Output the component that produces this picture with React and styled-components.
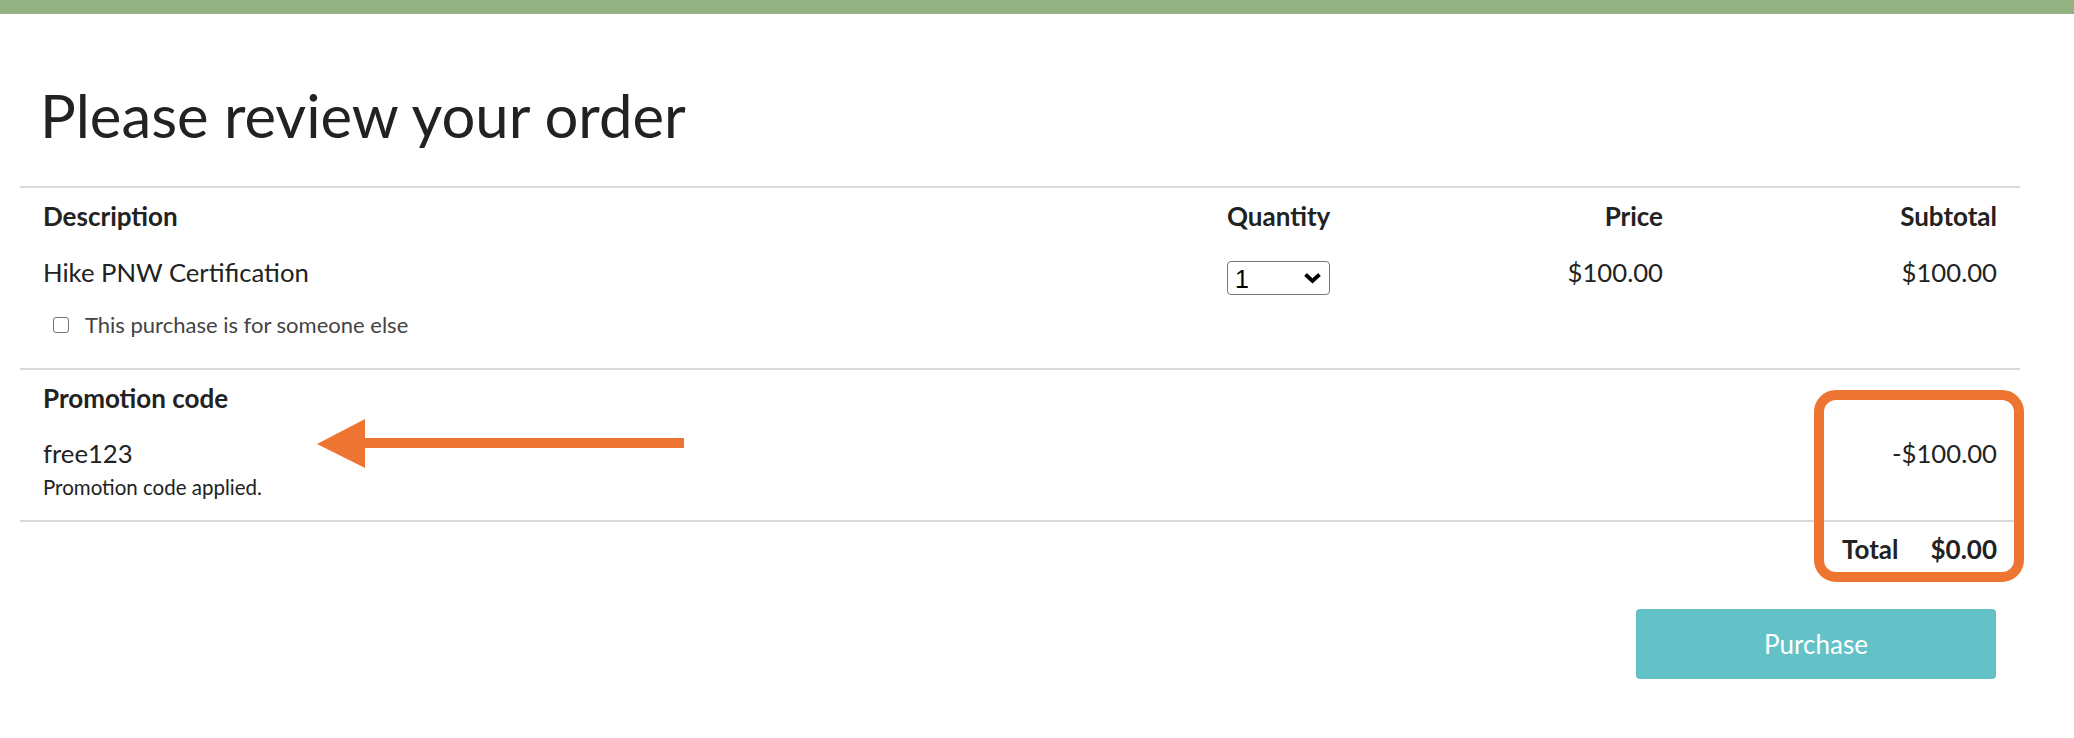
import React from 'react';
import styled, { createGlobalStyle } from 'styled-components';

const GlobalStyle = createGlobalStyle`
	body {
		margin: 0;
		background: #fff;
		font-family: Lato, "Noto Sans", sans-serif;
		color: #222;
	}
	* { box-sizing: border-box; }
`;

const Shell = styled.div`
	position: relative;
	min-height: 738px;
`;

const TopBar = styled.div`
	height: 14px;
	background-color: #94b183;
`;

const Page = styled.main`
	width: 2040px;
	padding: 0 20px;
`;

const Title = styled.h1`
	margin: 68px 0 37px 20px;
	font-size: 59.8px;
	font-weight: 400;
	line-height: 67px;
	color: #222;
`;

const Section = styled.section`
	border-top: 2px solid #d9d9d9;
	padding: ${(p) => p.$pt || 0}px 0 ${(p) => p.$pb || 0}px;
`;

const Row = styled.div`
	display: grid;
	grid-template-columns: 1184px 240px 242px 334px;
	margin-top: ${(p) => p.$mt || 0}px;
`;

const Cell = styled.div`
	padding: 0 23px;
	text-align: ${(p) => (p.$right ? 'right' : 'left')};
	font-size: ${(p) => (p.$head ? 26 : 25.7)}px;
	font-weight: ${(p) => (p.$head ? 700 : 400)};
	line-height: ${(p) => (p.$head ? 30 : 29)}px;
	color: #222;
`;

const SectionLabel = styled.div`
	padding: 0 23px;
	font-size: 26px;
	font-weight: 700;
	line-height: 30px;
`;

const CheckLine = styled.label`
	display: flex;
	align-items: center;
	gap: 16px;
	margin: 26px 0 0 10px;
	font-size: 22px;
	line-height: 24px;
	color: #444;
`;

const Check = styled.input`
	appearance: none;
	margin: 0;
	width: 16px;
	height: 16px;
	border: 1.5px solid #777;
	border-radius: 3px;
	background: #fff;
`;

const SelectWrap = styled.div`
	position: relative;
	width: 103px;
	height: 34px;
	margin-top: 3px;
`;

const Select = styled.select`
	appearance: none;
	width: 100%;
	height: 100%;
	padding: 2px 0 0 7px;
	border: 1.5px solid #777;
	border-radius: 4px;
	background: #fff;
	font-family: "Liberation Sans", Arial, sans-serif;
	font-size: 25px;
	color: #000;
`;

const Chevron = styled.svg`
	position: absolute;
	right: 8px;
	top: 11px;
	pointer-events: none;
`;

const Note = styled.div`
	margin-top: 7px;
	font-size: 20.5px;
	line-height: 24px;
	color: #222;
`;

const TotalCell = styled.div`
	display: flex;
	justify-content: flex-end;
	gap: 32px;
	padding: 0 23px;
	font-size: 26px;
	font-weight: 700;
	line-height: 30px;
`;

const Actions = styled.div`
	display: flex;
	justify-content: flex-end;
	margin-top: 45px;
	padding-right: 24px;
`;

const PurchaseButton = styled.button`
	width: 360px;
	height: 70px;
	border: none;
	border-radius: 4px;
	background-color: #63c2c8;
	color: #fff;
	font-family: Lato, sans-serif;
	font-size: 26px;
	cursor: pointer;
`;

const Highlight = styled.div`
	position: absolute;
	left: 1814px;
	top: 390px;
	width: 210px;
	height: 192px;
	border: 10px solid #ee7432;
	border-radius: 22px;
	pointer-events: none;
`;

const Arrow = styled.svg`
	position: absolute;
	left: 317px;
	top: 419px;
	pointer-events: none;
`;

function App() {
	return (
		<Shell>
			<GlobalStyle />
			<TopBar />
			<Page>
				<Title>Please review your order</Title>

				<Section $pt={13} $pb={31}>
					<Row>
						<Cell $head>Description</Cell>
						<Cell $head>Quantity</Cell>
						<Cell $head $right>Price</Cell>
						<Cell $head $right>Subtotal</Cell>
					</Row>
					<Row $mt={27}>
						<Cell>
							Hike PNW Certification
							<CheckLine>
								<Check type="checkbox" />
								This purchase is for someone else
							</CheckLine>
						</Cell>
						<Cell>
							<SelectWrap>
								<Select defaultValue="1">
									<option value="1">1</option>
									<option value="2">2</option>
									<option value="3">3</option>
								</Select>
								<Chevron width="19" height="12" viewBox="0 0 19 12">
									<path d="M2.5 2.5 L9.5 9 L16.5 2.5" fill="none" stroke="#000" strokeWidth="3.8" />
								</Chevron>
							</SelectWrap>
						</Cell>
						<Cell $right>$100.00</Cell>
						<Cell $right>$100.00</Cell>
					</Row>
				</Section>

				<Section $pt={13} $pb={21}>
					<SectionLabel>Promotion code</SectionLabel>
					<Row $mt={26}>
						<Cell>
							free123
							<Note>Promotion code applied.</Note>
						</Cell>
						<Cell />
						<Cell />
						<Cell $right>-$100.00</Cell>
					</Row>
				</Section>

				<Section $pt={12}>
					<Row>
						<Cell />
						<Cell />
						<Cell />
						<TotalCell>
							<span>Total</span>
							<span>$0.00</span>
						</TotalCell>
					</Row>
				</Section>

				<Actions>
					<PurchaseButton type="button">Purchase</PurchaseButton>
				</Actions>
			</Page>

			<Highlight />
			<Arrow width="368" height="50" viewBox="0 0 368 50">
				<polygon points="0,25 48,0 48,49" fill="#ee7432" />
				<rect x="47" y="19" width="320" height="10" fill="#ee7432" />
			</Arrow>
		</Shell>
	);
}

export default App;
